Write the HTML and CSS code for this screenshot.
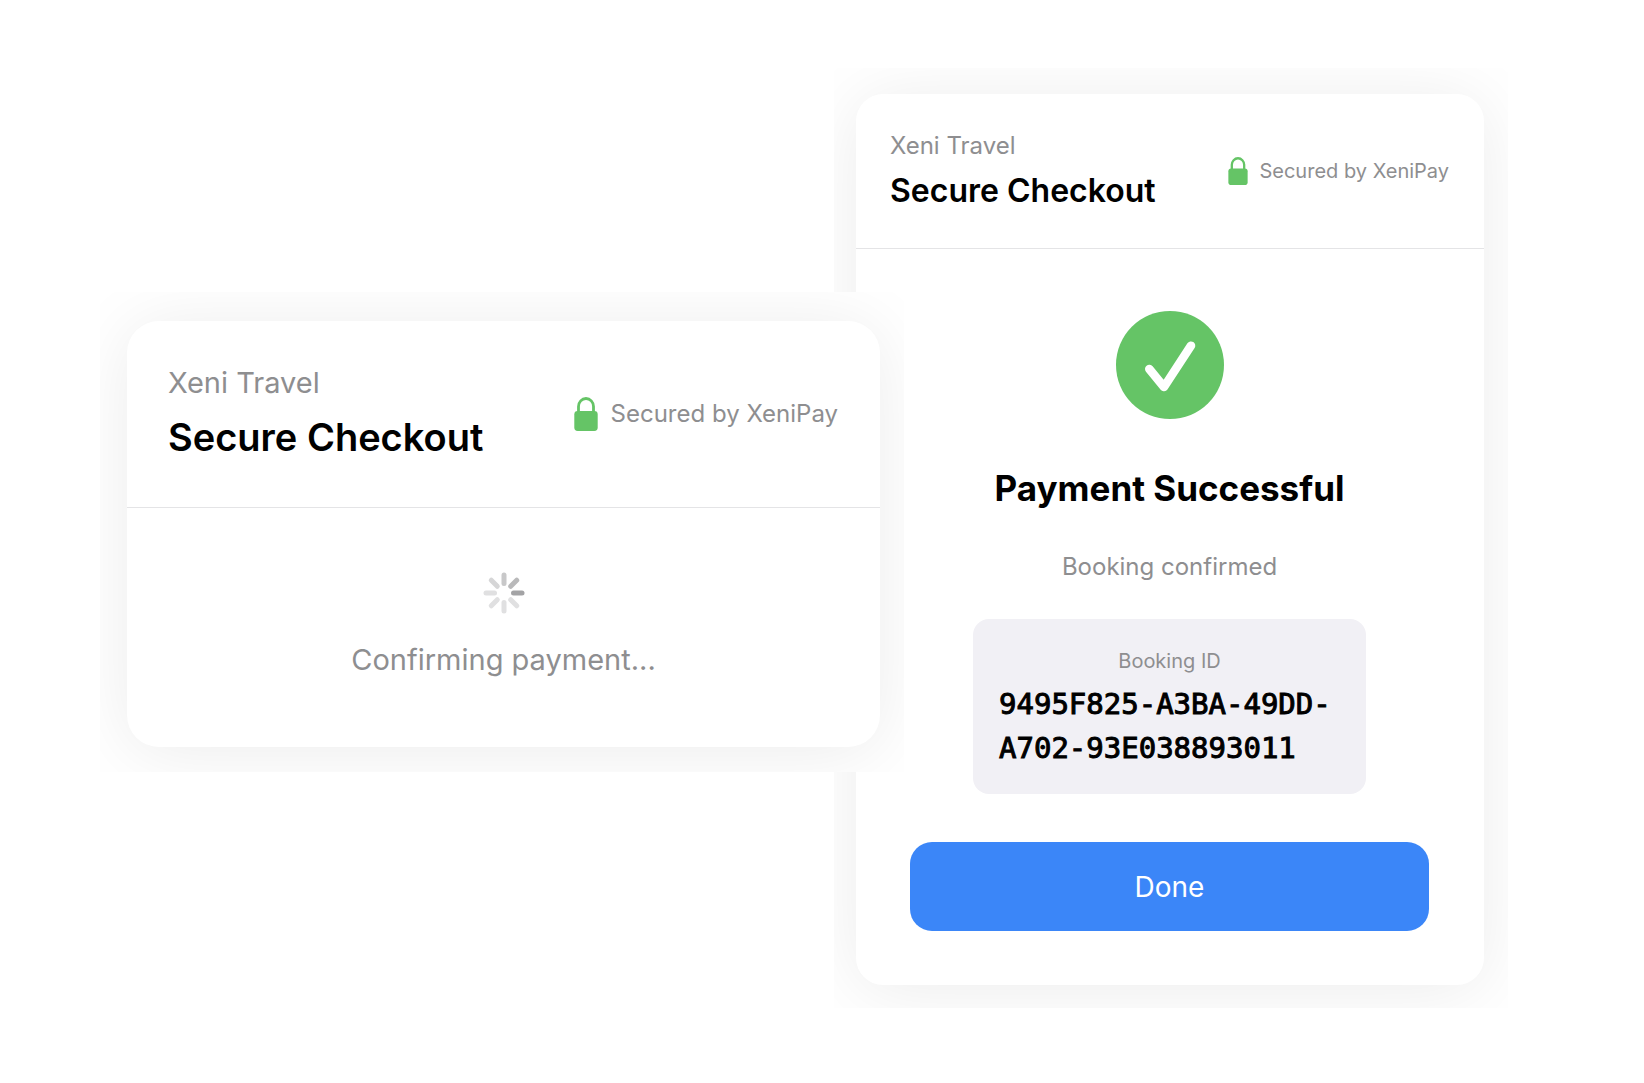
FILE: index.html
```html
<!DOCTYPE html>
<html lang="en">
<head>
    <meta charset="UTF-8">
    <meta name="viewport" content="width=device-width, initial-scale=1.0">
    <title>Xeni Travel - Secure Checkout</title>
    <link rel="stylesheet" href="styles.css">
</head>
<body>
    <main class="stage">
        <!-- Confirming payment -->
        <div class="panel panel-confirming">
            <section class="card">
                <header class="card-header">
                    <div>
                        <p class="merchant">Xeni Travel</p>
                        <h1 class="card-title">Secure Checkout</h1>
                    </div>
                    <div class="secured">
                        <svg class="lock" viewBox="0 0 24 34" aria-hidden="true">
                            <path d="M4.5 16V9.5a7.5 8 0 0 1 15 0V16" fill="none" stroke="#65c466" stroke-width="2.8"/>
                            <rect x="0.3" y="14" width="23.4" height="20" rx="3.4" fill="#65c466"/>
                        </svg>
                        <span>Secured by XeniPay</span>
                    </div>
                </header>
                <div class="progress" role="status">
                    <svg class="spinner" viewBox="-21 -21 42 42" aria-hidden="true">
                        <g stroke-width="5" stroke-linecap="round">
                            <path d="M9.5 0H18" stroke="#a3a3a5"/>
                            <path d="M9.5 0H18" stroke="#e0e0e1" transform="rotate(45)"/>
                            <path d="M9.5 0H18" stroke="#e0e0e1" transform="rotate(90)"/>
                            <path d="M9.5 0H18" stroke="#e0e0e1" transform="rotate(135)"/>
                            <path d="M9.5 0H18" stroke="#e0e0e1" transform="rotate(180)"/>
                            <path d="M9.5 0H18" stroke="#d6d6d7" transform="rotate(225)"/>
                            <path d="M9.5 0H18" stroke="#c8c8c9" transform="rotate(270)"/>
                            <path d="M9.5 0H18" stroke="#b9b9ba" transform="rotate(315)"/>
                        </g>
                    </svg>
                    <p class="progress-text">Confirming payment...</p>
                </div>
            </section>
        </div>

        <!-- Payment successful -->
        <div class="panel panel-success">
            <section class="card card-small">
                <header class="card-header">
                    <div>
                        <p class="merchant">Xeni Travel</p>
                        <h1 class="card-title">Secure Checkout</h1>
                    </div>
                    <div class="secured">
                        <svg class="lock" viewBox="0 0 24 34" aria-hidden="true">
                            <path d="M4.5 16V9.5a7.5 8 0 0 1 15 0V16" fill="none" stroke="#65c466" stroke-width="2.8"/>
                            <rect x="0.3" y="14" width="23.4" height="20" rx="3.4" fill="#65c466"/>
                        </svg>
                        <span>Secured by XeniPay</span>
                    </div>
                </header>
                <div class="result">
                    <svg class="check" viewBox="0 0 108 108" aria-hidden="true">
                        <circle cx="54" cy="54" r="54" fill="#65c466"/>
                        <path d="M33.3 58 48 76 75 34.7" fill="none" stroke="#fff" stroke-width="8.6" stroke-linecap="round" stroke-linejoin="round"/>
                    </svg>
                    <h2 class="result-title">Payment Successful</h2>
                    <p class="result-text">Booking confirmed</p>
                    <div class="booking">
                        <p class="booking-label">Booking ID</p>
                        <p class="booking-id">9495F825-A3BA-49DD-A702-93E038893011</p>
                    </div>
                    <button type="button" class="done">Done</button>
                </div>
            </section>
        </div>
    </main>
</body>
</html>
```
FILE: styles.css
```css
* {
    box-sizing: border-box;
}
body {
    margin: 0;
    background-color: #fff;
    color: #000;
    font-family: Inter, "Liberation Sans", sans-serif;
}
h1, h2, p {
    margin: 0;
}
.stage {
    display: flex;
    align-items: flex-start;
    padding: 68px 136px 75px 100px;
}

/* each panel is white and cuts off the shadow of its card */
.panel {
    overflow: hidden;
    background-color: #fff;
}
.panel-confirming {
    flex: 804 1 804px;
    z-index: 1;
    margin-top: 224px;
    margin-right: -70px;
    padding: 29px 24px 25px 27px;
}
.panel-success {
    flex: 674 1 674px;
    padding: 26px 24px 23px 22px;
}
.card {
    background-color: #fff;
    border-radius: 32px;
    box-shadow: 0 5px 70px rgba(0, 0, 0, 0.08);
}
.card-header {
    display: flex;
    justify-content: space-between;
    align-items: center;
    padding: 42px 42px 42px 41px;
    border-bottom: 1px solid #e4e4e6;
}
.merchant {
    margin-bottom: 6px;
    color: #8e8e90;
    font-size: 29px;
    line-height: 40px;
}
.card-title {
    font-size: 38px;
    font-weight: 600;
    line-height: 56px;
}
.secured {
    display: flex;
    align-items: center;
    gap: 13px;
    color: #8e8e90;
    font-size: 24px;
    line-height: 34px;
    white-space: nowrap;
}
.lock {
    width: 24px;
    height: 34px;
}

/* Confirming payment */
.progress {
    display: flex;
    flex-direction: column;
    align-items: center;
    gap: 26px;
    padding: 64px 42px 67px;
}
.spinner {
    width: 42px;
    height: 42px;
}
.progress-text {
    color: #8e8e90;
    font-size: 29px;
    line-height: 40px;
}

/* Smaller card */
.card-small {
    border-radius: 27px;
}
.card-small .card-header {
    padding: 35px 35px 35px 34px;
}
.card-small .merchant {
    font-size: 24px;
    line-height: 34px;
}
.card-small .card-title {
    font-size: 32px;
    line-height: 44px;
}
.card-small .secured {
    gap: 11px;
    font-size: 20px;
    line-height: 28px;
}
.card-small .lock {
    width: 20px;
    height: 28px;
}

/* Payment successful */
.result {
    display: flex;
    flex-direction: column;
    align-items: center;
    padding: 62px 55px 54px 54px;
}
.check {
    width: 108px;
    height: 108px;
    margin-bottom: 44px;
}
.result-title {
    margin-bottom: 36px;
    font-size: 35px;
    font-weight: 700;
    line-height: 50px;
}
.result-text {
    margin-bottom: 34px;
    color: #8e8e90;
    font-size: 24px;
    line-height: 36px;
}
.booking {
    width: 393px;
    max-width: 100%;
    margin-bottom: 48px;
    padding: 28px 26px 24px;
    border-radius: 16px;
    background-color: #f1f0f5;
}
.booking-label {
    margin-bottom: 7px;
    color: #8e8e90;
    font-size: 20px;
    line-height: 28px;
    text-align: center;
}
/* the mono face has no medium weight, the stroke thickens the regular one */
.booking-id {
    font-family: "DejaVu Sans Mono", "Liberation Mono", monospace;
    font-size: 29px;
    line-height: 44px;
    -webkit-text-stroke: 1px #000;
}
.done {
    width: 100%;
    padding: 25px 24px 23px;
    border: none;
    border-radius: 22px;
    background-color: #3b86f8;
    color: #fff;
    font-family: inherit;
    font-size: 28px;
    line-height: 41px;
    cursor: pointer;
}
```
